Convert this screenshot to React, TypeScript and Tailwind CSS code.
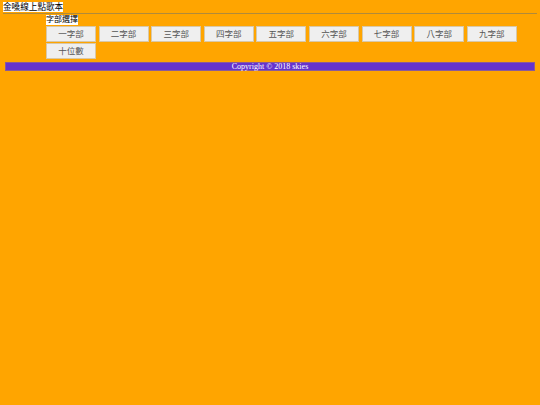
const BUTTONS = ['一字部', '二字部', '三字部', '四字部', '五字部', '六字部', '七字部', '八字部', '九字部', '十位數']

export default function App() {
  return (
    <div className="min-h-[405px] w-full bg-[#ffa500] font-['Liberation_Serif','Noto_Sans_CJK_TC',serif]">
      <div className="mx-[3px] h-[14px] border-b border-[#b08a3a] pt-[2px]">
        <span className="inline-block h-[10px] bg-white align-top text-[8.6px] leading-[10px] text-black">金嗓線上點歌本</span>
      </div>
      <div className="ml-[46px] mt-px h-[10px]">
        <span className="inline-block h-[10px] bg-white align-top text-[8px] leading-[10px] text-black">字部選擇</span>
      </div>
      <div className="ml-[46px] mt-px flex w-[480px] flex-wrap gap-x-[2.6px] gap-y-px">
        {BUTTONS.map((b) => (
          <button
            key={b}
            className="h-4 w-[50px] border border-[#d8c8a8] bg-[#efefef] text-[8.5px] leading-none text-[#555]"
          >
            {b}
          </button>
        ))}
      </div>
      <div className="mx-[5px] mt-[2.5px] h-[9px] border border-[#8a5a9a] bg-[#6633cc] text-center text-[8px] leading-[7px] text-white">
        Copyright © 2018 skies
      </div>
    </div>
  )
}
